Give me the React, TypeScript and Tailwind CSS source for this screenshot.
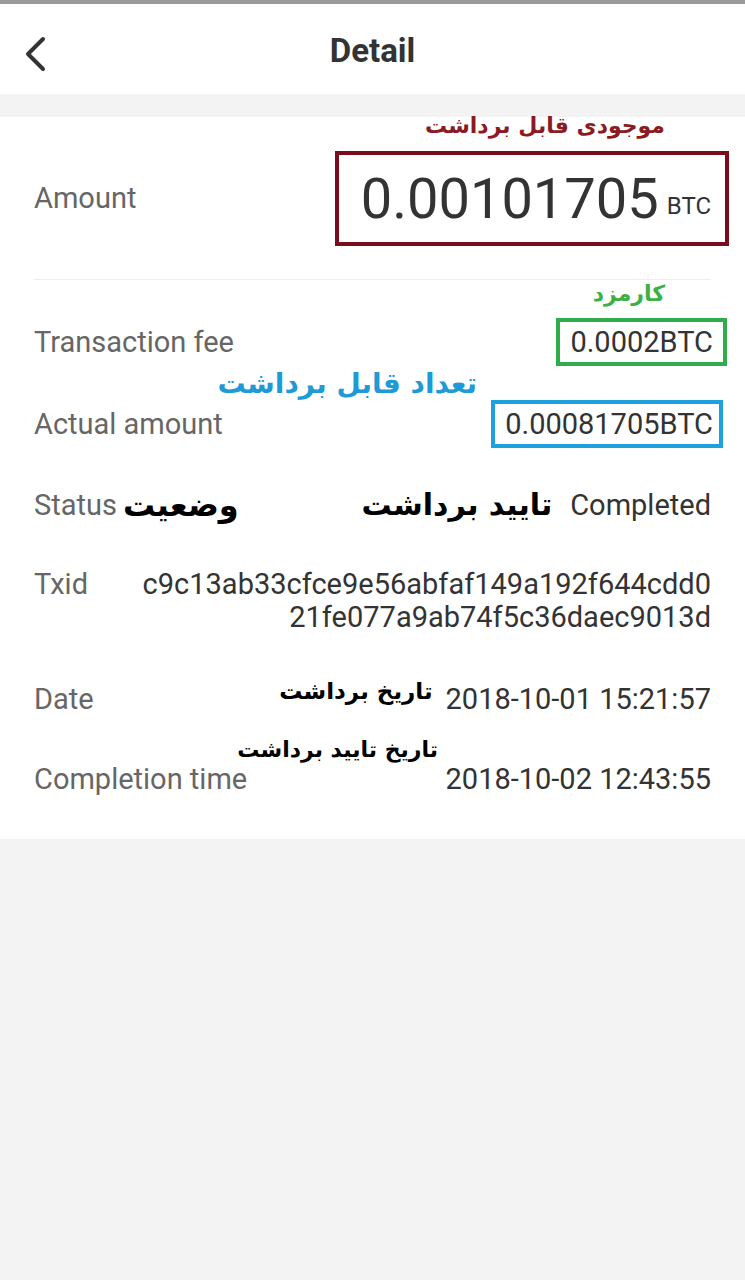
import React from 'react';

const fa = { fontFamily: '"DejaVu Sans", sans-serif' };

function Row({
  label,
  children,
  className = '',
}: {
  label: React.ReactNode;
  children: React.ReactNode;
  className?: string;
}) {
  return (
    <div className={`relative flex items-center justify-between ${className}`}>
      <div className="text-[#666] text-[29px] leading-none">{label}</div>
      {children}
    </div>
  );
}

export default function App() {
  return (
    <div
      className="min-h-screen w-full bg-[#f3f3f3]"
      style={{ fontFamily: 'Roboto, "Liberation Sans", sans-serif' }}
    >
      <div className="h-[4px] bg-[#9a9a9a]" />

      {/* Header */}
      <div className="relative flex h-[90px] items-center justify-center bg-white">
        <button className="absolute left-[18px] top-[25px] p-1">
          <svg width="28" height="42" viewBox="0 0 28 42" fill="none">
            <path d="M21 6 L6 21 L21 36" stroke="#333" strokeWidth="4" strokeLinecap="round" strokeLinejoin="round" />
          </svg>
        </button>
        <h1 className="mt-[4px] text-[33px] font-bold text-[#333]">Detail</h1>
      </div>

      <div className="h-[23px]" />

      {/* Detail card */}
      <div className="bg-white px-[34px] pb-[36px]">
        {/* Amount */}
        <Row label="Amount" className="pt-[34px] pb-[33px]">
          <span
            dir="rtl"
            className="absolute right-[46px] top-[-2px] text-[22px] font-bold leading-none text-[#8b1a22]"
            style={fa}
          >
            موجودی قابل برداشت
          </span>
          <div className="mr-[-18px] flex h-[95px] items-center border-4 border-[#7a0c1d] pl-[22px] pr-[14px] text-[#333]">
            <span className="text-[56px] leading-none">0.00101705</span>
            <span className="ml-[8px] mt-[14px] text-[24px] leading-none">BTC</span>
          </div>
        </Row>

        <div className="h-px bg-[#eeeeee]" />

        {/* Fee */}
        <Row label="Transaction fee" className="mt-[38px] h-[48px]">
          <span
            dir="rtl"
            className="absolute right-[46px] top-[-35px] text-[22px] font-bold leading-none text-[#3cb043]"
            style={fa}
          >
            کارمزد
          </span>
          <div className="mr-[-16px] flex h-[48px] items-center border-4 border-[#2fad4c] pl-[10px] pr-[10px] text-[29px] leading-none text-[#333]">
            0.0002BTC
          </div>
        </Row>

        {/* Actual amount */}
        <Row label="Actual amount" className="mt-[34px] h-[48px]">
          <span
            dir="rtl"
            className="absolute right-[234px] top-[-30px] text-[28px] font-bold leading-none text-[#1e9ad6]"
            style={fa}
          >
            تعداد قابل برداشت
          </span>
          <div className="mr-[-12px] flex h-[48px] items-center border-4 border-[#1ea0dc] pl-[10px] pr-[6px] text-[29px] leading-none text-[#333]">
            0.00081705BTC
          </div>
        </Row>

        {/* Status */}
        <Row
          label={
            <div className="flex items-center gap-[6px]">
              <span>Status</span>
              <span dir="rtl" className="text-[32px] font-bold text-black" style={fa}>
                وضعیت
              </span>
            </div>
          }
          className="mt-[33px] h-[48px]"
        >
          <div className="flex items-center gap-[18px]">
            <span dir="rtl" className="text-[30px] font-bold leading-none text-black" style={fa}>
              تایید برداشت
            </span>
            <span className="text-[29px] leading-none text-[#333]">Completed</span>
          </div>
        </Row>

        {/* Txid */}
        <div className="mt-[39px] flex items-start justify-between">
          <div className="text-[29px] leading-[33px] text-[#666]">Txid</div>
          <div className="text-right text-[29px] leading-[33px] text-[#333]">
            <div>c9c13ab33cfce9e56abfaf149a192f644cdd0</div>
            <div>21fe077a9ab74f5c36daec9013d</div>
          </div>
        </div>

        {/* Date */}
        <Row label="Date" className="mt-[41px] h-[48px]">
          <div className="flex items-center gap-[13px]">
            <span dir="rtl" className="mb-[16px] text-[23px] font-bold leading-none text-black" style={fa}>
              تاریخ برداشت
            </span>
            <span className="text-[29px] leading-none text-[#333]">2018-10-01 15:21:57</span>
          </div>
        </Row>

        {/* Completion time */}
        <Row label="Completion time" className="mt-[32px] h-[48px]">
          <span
            dir="rtl"
            className="absolute right-[273px] top-[-16px] text-[22px] font-bold leading-none text-black"
            style={fa}
          >
            تاريخ تاييد برداشت
          </span>
          <span className="text-[29px] leading-none text-[#333]">2018-10-02 12:43:55</span>
        </Row>
      </div>
    </div>
  );
}
